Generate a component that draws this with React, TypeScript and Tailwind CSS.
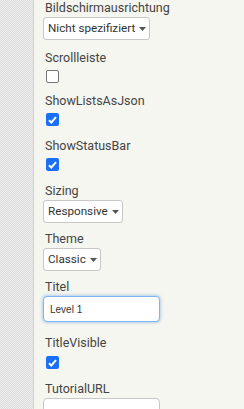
import type { ReactNode } from "react";

const font = { fontFamily: "Roboto, 'Noto Sans', sans-serif" };

function Label({ children, className = "" }: { children: ReactNode; className?: string }) {
  return (
    <div className={"h-4 pl-[2px] text-[12.5px] leading-4 text-[#444] " + className}>{children}</div>
  );
}

function Select({ value, className = "" }: { value: string; className?: string }) {
  return (
    <div
      className={
        "flex h-[23px] w-fit items-center gap-[4px] rounded-[3px] border border-[#c8c8c8] bg-white pl-[4px] pr-[3px] text-[11.7px] text-[#333] " +
        className
      }
    >
      <span>{value}</span>
      <svg width="7" height="4" viewBox="0 0 7 4">
        <path d="M0 0h7L3.5 4z" fill="#555" />
      </svg>
    </div>
  );
}

function Checkbox({ checked, className = "" }: { checked?: boolean; className?: string }) {
  return (
    <div className={"pl-[3px] " + className}>
      {checked ? (
        <div className="flex h-[13px] w-[13px] items-center justify-center rounded-[2px] bg-[#1a6ff5]">
          <svg width="9" height="8" viewBox="0 0 9 8">
            <path d="M1 4.2l2.3 2.3L8 1.2" stroke="white" strokeWidth="2" fill="none" />
          </svg>
        </div>
      ) : (
        <div className="h-[13px] w-[13px] rounded-[2px] border border-[#767676] bg-white" />
      )}
    </div>
  );
}

export default function App() {
  return (
    <div className="flex h-[409px] w-[244px] overflow-hidden" style={font}>
      <div className="w-[33px] shrink-0 bg-[#e6e6e6] bg-[repeating-conic-gradient(#dcdcdc_0_25%,#eeeeee_0_50%)] bg-[length:2px_2px]" />
      <div className="w-px shrink-0 bg-[#cfcfcc]" />
      <div className="flex-1 bg-[#f5f6ef] pl-[9px]">
        <Label>Bildschirmausrichtung</Label>
        <Select value="Nicht spezifiziert" className="mt-[1px]" />

        <Label className="mt-[10px]">Scrollleiste</Label>
        <Checkbox className="mt-[4px]" />

        <Label className="mt-[10px]">ShowListsAsJson</Label>
        <Checkbox checked className="mt-[4px]" />

        <Label className="mt-[12px]">ShowStatusBar</Label>
        <Checkbox checked className="mt-[4px]" />

        <Label className="mt-[12px]">Sizing</Label>
        <Select value="Responsive" className="mt-[1px]" />

        <Label className="mt-[8px]">Theme</Label>
        <Select value="Classic" className="mt-[1px]" />

        <Label className="mt-[8px]">Titel</Label>
        <div
          className="mt-[1px] flex h-[26px] w-[117px] items-center rounded-[4px] border border-[#7fb4ee] bg-white pl-[6px] text-[10px] text-[#333] shadow-[0_0_3px_1px_rgba(100,160,230,0.45)]"
          style={{ fontFamily: "'Liberation Sans', Arial, sans-serif" }}
        >
          Level 1
        </div>

        <Label className="mt-[13px]">TitleVisible</Label>
        <Checkbox checked className="mt-[5px]" />

        <Label className="mt-[12px]">TutorialURL</Label>
        <div className="mt-[1px] h-[26px] w-[117px] rounded-[4px] border border-[#c8c8c8] bg-white" />
      </div>
    </div>
  );
}
